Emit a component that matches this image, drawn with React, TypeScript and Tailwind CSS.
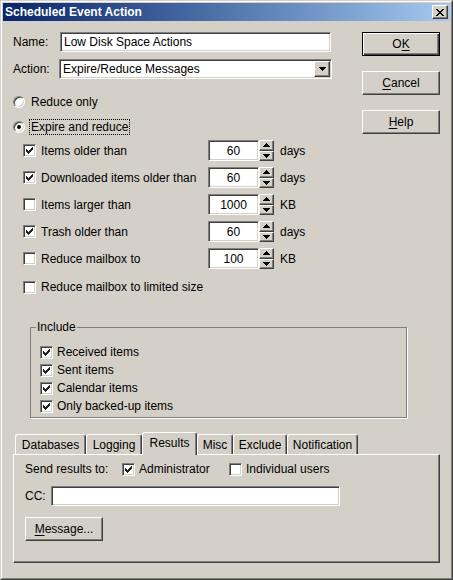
import React from 'react'

const sunken =
  'border border-t-[#808080] border-l-[#808080] border-b-white border-r-white shadow-[inset_1px_1px_0_#404040,inset_-1px_-1px_0_#d4d0c8]'
const raised =
  'border border-t-white border-l-white border-b-[#404040] border-r-[#404040] shadow-[inset_-1px_-1px_0_#808080] bg-[#d4d0c8]'

const CheckBox = ({ checked }: { checked?: boolean }) => (
  <span className={`flex h-[13px] w-[13px] shrink-0 items-center justify-center bg-white ${sunken}`}>
    {checked && (
      <svg width="7" height="7" viewBox="0 0 7 7" shapeRendering="crispEdges">
        <rect x="0" y="2" width="1" height="3" fill="#222" />
        <rect x="1" y="3" width="1" height="3" fill="#222" />
        <rect x="2" y="4" width="1" height="3" fill="#222" />
        <rect x="3" y="3" width="1" height="3" fill="#222" />
        <rect x="4" y="2" width="1" height="3" fill="#222" />
        <rect x="5" y="1" width="1" height="3" fill="#222" />
        <rect x="6" y="0" width="1" height="3" fill="#222" />
      </svg>
    )}
  </span>
)

const Radio = ({ checked }: { checked?: boolean }) => (
  <span className="flex h-[12px] w-[12px] shrink-0 items-center justify-center rounded-full border border-t-[#808080] border-l-[#808080] border-b-white border-r-white bg-white shadow-[inset_1px_1px_0_#404040,inset_-1px_-1px_0_#d4d0c8]">
    {checked && <span className="h-[4px] w-[4px] rounded-full bg-black" />}
  </span>
)

// small black triangle for the spin buttons
const Arrow = ({ up }: { up?: boolean }) => (
  <svg width="7" height="4" viewBox="0 0 7 4" shapeRendering="crispEdges">
    <rect x="3" y={up ? 0 : 3} width="1" height="1" fill="#000" />
    <rect x="2" y={up ? 1 : 2} width="3" height="1" fill="#000" />
    <rect x="1" y={up ? 2 : 1} width="5" height="1" fill="#000" />
    <rect x="0" y={up ? 3 : 0} width="7" height="1" fill="#000" />
  </svg>
)

const Spin = ({ value, unit }: { value: string; unit: string }) => (
  <>
    <div className={`flex h-[21px] w-[51px] items-center justify-center bg-white ${sunken}`}>{value}</div>
    <div className="flex h-[21px] w-[15px] flex-col">
      <div className={`flex flex-1 items-center justify-center ${raised}`}>
        <Arrow up />
      </div>
      <div className={`flex flex-1 items-center justify-center ${raised}`}>
        <Arrow />
      </div>
    </div>
    <span className="ml-[6px]">{unit}</span>
  </>
)

const rows = [
  { checked: true, label: 'Items older than', value: '60', unit: 'days' },
  { checked: true, label: 'Downloaded items older than', value: '60', unit: 'days' },
  { checked: false, label: 'Items larger than', value: '1000', unit: 'KB' },
  { checked: true, label: 'Trash older than', value: '60', unit: 'days' },
  { checked: false, label: 'Reduce mailbox to', value: '100', unit: 'KB' },
]

const tabs = [
  { name: 'Databases', w: 'w-[71px]' },
  { name: 'Logging', w: 'w-[56px]' },
  { name: 'Results', w: 'w-[55px]' },
  { name: 'Misc', w: 'w-[36px]' },
  { name: 'Exclude', w: 'w-[54px]' },
  { name: 'Notification', w: 'w-[71px]' },
]

export default function App() {
  return (
    <div className="h-[580px] w-[453px] overflow-hidden border border-t-[#d4d0c8] border-l-[#d4d0c8] border-b-[#404040] border-r-[#404040] bg-[#d4d0c8] font-['Liberation_Sans',Arial,sans-serif] text-[12px] leading-[14px] text-black">
      <div className="h-full border border-t-white border-l-white border-b-[#808080] border-r-[#808080] p-px">
        {/* title bar */}
        <div className="flex h-[18px] items-center bg-linear-to-r from-[#0a246a] to-[#a6caf0] px-[2px]">
          <span className="font-bold text-white">Scheduled Event Action</span>
          <div className={`ml-auto flex h-[14px] w-[16px] items-center justify-center ${raised}`}>
            <svg width="8" height="7" viewBox="0 0 8 7" shapeRendering="crispEdges">
              <path d="M0 0h2v1h1v1h2v-1h1v-1h2v1h-1v1h-1v1h-1v1h1v1h1v1h1v1h-2v-1h-1v-1h-2v1h-1v1h-2v-1h1v-1h1v-1h1v-1h-1v-1h-1z" fill="#000" />
            </svg>
          </div>
        </div>

        {/* top section */}
        <div className="flex">
          <div className="ml-[10px] w-[323px]">
            <div className="mt-[11px] flex h-[20px] items-center">
              <span className="w-[47px]">Name:</span>
              <input
                readOnly
                defaultValue="Low Disk Space Actions"
                className={`h-[20px] w-[271px] bg-white pl-[3px] outline-none ${sunken}`}
              />
            </div>
            <div className="mt-[7px] flex h-[20px] items-center">
              <span className="w-[46px]">Action:</span>
              <div className={`flex h-[20px] w-[273px] items-center bg-white pl-[3px] ${sunken}`}>
                <span>Expire/Reduce Messages</span>
                <div className={`ml-auto mr-px flex h-[16px] w-[16px] items-center justify-center ${raised}`}>
                  <Arrow />
                </div>
              </div>
            </div>

            <div className="mt-[15px] flex h-[16px] items-center">
              <Radio />
              <span className="ml-[4px] border border-transparent px-px">Reduce only</span>
            </div>
            <div className="mt-[9px] flex h-[16px] items-center">
              <Radio checked />
              <span className="ml-[4px] border border-dotted border-black px-px">Expire and reduce</span>
            </div>

            <div className="mt-[5px] flex flex-col gap-[6px]">
              {rows.map((r) => (
                <div key={r.label} className="flex h-[21px] items-center">
                  <span className="ml-[10px]">
                    <CheckBox checked={r.checked} />
                  </span>
                  <span className="ml-[5px] w-[167px] pt-px">{r.label}</span>
                  <Spin value={r.value} unit={r.unit} />
                </div>
              ))}
            </div>
            <div className="mt-[10px] flex h-[16px] items-center">
              <span className="ml-[10px]">
                <CheckBox />
              </span>
              <span className="ml-[5px]">Reduce mailbox to limited size</span>
            </div>
          </div>

          {/* buttons */}
          <div className="ml-[26px] mt-[11px] flex flex-col gap-[15px]">
            <button className="flex h-[24px] w-[78px] items-center justify-center border border-black bg-[#d4d0c8] shadow-[inset_1px_1px_0_#fff,inset_-1px_-1px_0_#404040,inset_-2px_-2px_0_#808080]">
              O<span className="underline underline-offset-2">K</span>
            </button>
            <button className={`flex h-[24px] w-[78px] items-center justify-center ${raised}`}>
              <span className="underline underline-offset-2">C</span>ancel
            </button>
            <button className={`flex h-[24px] w-[78px] items-center justify-center ${raised}`}>
              <span className="underline underline-offset-2">H</span>elp
            </button>
          </div>
        </div>

        {/* include group */}
        <fieldset className="ml-[27px] mt-[25px] w-[377px] border border-[#808080] pb-[2px] pl-[9px] pt-[9px] shadow-[1px_1px_0_#fff]">
          <legend className="-ml-[4px] px-px">Include</legend>
          {['Received items', 'Sent items', 'Calendar items', 'Only backed-up items'].map((t) => (
            <div key={t} className="flex h-[18px] items-center">
              <CheckBox checked />
              <span className="ml-[4px]">{t}</span>
            </div>
          ))}
        </fieldset>

        {/* tabs */}
        <div className="ml-[10px] mt-[14px] flex h-[22px] items-end pl-[2px]">
          {tabs.map((t) =>
            t.name === 'Results' ? (
              <div
                key={t.name}
                className={`relative z-10 -mb-px flex h-[23px] items-center justify-center rounded-t-[3px] border-l border-r border-t border-t-white border-l-white border-r-[#404040] bg-[#d4d0c8] pb-[2px] shadow-[inset_-1px_0_0_#808080] ${t.w}`}
              >
                {t.name}
              </div>
            ) : (
              <div
                key={t.name}
                className={`flex h-[20px] items-center justify-center rounded-t-[3px] border-l border-r border-t border-t-white border-l-white border-r-[#404040] shadow-[inset_-1px_0_0_#808080] ${t.w}`}
              >
                {t.name}
              </div>
            ),
          )}
        </div>
        <div className="ml-[10px] h-[109px] w-[427px] border border-t-white border-l-white border-b-[#404040] border-r-[#404040] pl-[11px] pt-[6px] shadow-[inset_-1px_-1px_0_#808080]">
          <div className="flex h-[16px] items-center">
            <span className="w-[97px]">Send results to:</span>
            <CheckBox checked />
            <span className="ml-[4px] w-[90px]">Administrator</span>
            <CheckBox />
            <span className="ml-[4px]">Individual users</span>
          </div>
          <div className="mt-[9px] flex h-[20px] items-center">
            <span className="w-[26px]">CC:</span>
            <input readOnly className={`h-[20px] w-[289px] bg-white outline-none ${sunken}`} />
          </div>
          <button className={`mt-[11px] flex h-[24px] w-[78px] items-center justify-center ${raised}`}>
            <span className="underline underline-offset-2">M</span>essage...
          </button>
        </div>
      </div>
    </div>
  )
}
